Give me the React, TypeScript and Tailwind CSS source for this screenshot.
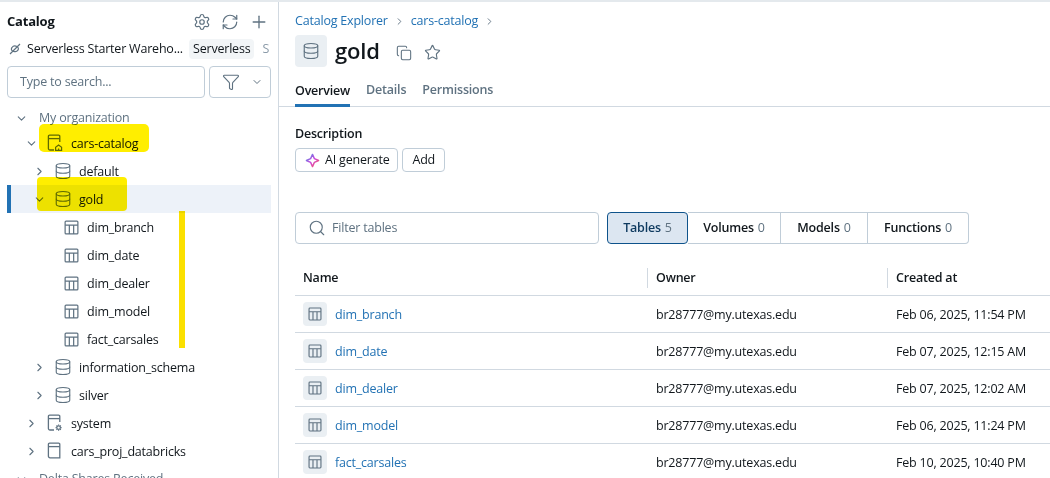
import React from "react";
import { ChevronDown, ChevronRight, Copy, Database, Filter, Plus, RefreshCw, Search, Settings, Star } from "lucide-react";

function TableIcon({ size = 16, className = "" }: { size?: number; className?: string }) {
  return (
    <svg width={size} height={size} viewBox="0 0 16 16" fill="none" stroke="currentColor" strokeWidth="1.3" className={className}>
      <rect x="1.2" y="1.2" width="13.6" height="13.6" rx="1" />
      <path d="M1.2 5.4h13.6M5.7 5.4v9.4M10.3 5.4v9.4" />
    </svg>
  );
}

function CatalogIcon({ badge }: { badge?: "home" | "gear" }) {
  return (
    <svg width="16" height="18" viewBox="0 0 16 18" fill="none" stroke="currentColor" strokeWidth="1.3" className="text-[#5f7281]">
      <path d={badge ? "M7 16H3a1.6 1.6 0 0 1-1.6-1.6V2.4A1.2 1.2 0 0 1 2.6 1.2h9a1.2 1.2 0 0 1 1.2 1.2V8" : "M2.6 1.2h9a1.2 1.2 0 0 1 1.2 1.2v13.4H3a1.6 1.6 0 0 1-1.6-1.6V2.4a1.2 1.2 0 0 1 1.2-1.2Z"} />
      <path d="M1.4 4.6h11.4" />
      {badge === "home" && <path d="M8.6 16.4v-3.2l3-2.2 3 2.2v3.2ZM11.6 16.4v-2" strokeWidth="1.2" />}
      {badge === "gear" && (
        <g strokeWidth="1.2">
          <circle cx="11.6" cy="13.6" r="1.8" />
          <path d="M11.6 10.4v1.2M11.6 15.6v1.2M8.6 13.6h1.2M13.4 13.6h1.2M9.5 11.5l.8.8M13 15l.8.8M13.8 11.5l-.8.8M10.3 15l-.8.8" />
        </g>
      )}
    </svg>
  );
}

function Db({ size = 18 }: { size?: number }) {
  return <Database size={size} strokeWidth={1.5} className="text-[#5f7281] shrink-0" />;
}

function Tree({ pad, chev, icon, label, selected }: { pad: number; chev?: "down" | "right"; icon: React.ReactNode; label: string; selected?: boolean }) {
  return (
    <div className={"flex h-7 items-center text-[12.5px] text-[#11171c] ml-[7px] w-[264px] border-l-4 " + (selected ? "bg-[#edf2f9] border-[#2272b4]" : "border-transparent")} style={{ paddingLeft: pad }}>
      <span className="flex w-4 justify-center text-[#5f7281] shrink-0">
        {chev === "down" && <ChevronDown size={13} strokeWidth={2} />}
        {chev === "right" && <ChevronRight size={13} strokeWidth={2} />}
      </span>
      <span className="ml-[8px] flex w-4 justify-center shrink-0">{icon}</span>
      <span className="ml-2 pt-[3px]">{label}</span>
    </div>
  );
}

const tables = [
  ["dim_branch", "Feb 06, 2025, 11:54 PM"],
  ["dim_date", "Feb 07, 2025, 12:15 AM"],
  ["dim_dealer", "Feb 07, 2025, 12:02 AM"],
  ["dim_model", "Feb 06, 2025, 11:24 PM"],
  ["fact_carsales", "Feb 10, 2025, 10:40 PM"],
];

function Sidebar() {
  return (
    <aside className="relative w-[279px] shrink-0 border-r border-[#d1d9e1] h-full overflow-hidden">
      <div className="flex h-[38px] items-center justify-between pl-[7px] pr-[9px] pt-[1px]">
        <span className="text-[13px] font-bold text-[#11171c]">Catalog</span>
        <div className="flex items-center gap-[10px] text-[#5f7281]">
          <Settings size={18} strokeWidth={1.6} />
          <RefreshCw size={18} strokeWidth={1.6} />
          <Plus size={20} strokeWidth={1.6} />
        </div>
      </div>
      <div className="flex h-[20px] mt-[-1px] items-center pl-[9px] text-[12.5px] text-[#11171c] whitespace-nowrap overflow-hidden">
        <svg width="12" height="12" viewBox="0 0 12 12" fill="none" stroke="#5f7281" strokeWidth="1.2" className="shrink-0">
          <path d="M3 4.5C4 3 6 2.5 8 3.5c1.5.8 1.8 2.6.8 3.8C7.6 8.7 5 9 3.5 8 2.2 7 2 5.7 3 4.5ZM1 11 11 1" />
        </svg>
        <span className="ml-[6px] w-[158px]">Serverless Starter Wareho...</span>
        <span className="ml-1 rounded bg-[#f2f5f7] px-1 leading-[20px]">Serverless</span>
        <span className="ml-2 text-[#8a9aa8]">S</span>
      </div>
      <div className="mt-[7px] flex gap-1 pl-[7px]">
        <div className="flex h-8 w-[198px] items-center rounded border border-[#c0cdd8] pl-[12px] text-[12.5px] text-[#5f7281]">Type to search...</div>
        <div className="flex h-8 w-[62px] items-center rounded border border-[#c0cdd8] pl-[12px] text-[#5f7281]">
          <Filter size={18} strokeWidth={1.5} />
          <ChevronDown size={12} strokeWidth={2} className="ml-[11px]" />
        </div>
      </div>
      <div className="mt-[3px]">
        <div className="flex h-7 items-center pl-[15px] text-[12.5px] text-[#5f7281] pt-[7px]">
          <ChevronDown size={13} strokeWidth={2} />
          <span className="ml-[11px]">My organization</span>
        </div>
        <Tree pad={12} chev="down" icon={<CatalogIcon badge="home" />} label="cars-catalog" />
        <Tree pad={20} chev="right" icon={<Db />} label="default" />
        <Tree pad={20} chev="down" icon={<Db />} label="gold" selected />
        {tables.map(([n]) => (
          <Tree key={n} pad={28} icon={<TableIcon size={15} className="text-[#5f7281]" />} label={n} />
        ))}
        <Tree pad={20} chev="right" icon={<Db />} label="information_schema" />
        <Tree pad={20} chev="right" icon={<Db />} label="silver" />
        <Tree pad={12} chev="right" icon={<CatalogIcon badge="gear" />} label="system" />
        <Tree pad={12} chev="right" icon={<CatalogIcon />} label="cars_proj_databricks" />
        <div className="flex h-7 items-center pl-[15px] text-[12.5px] text-[#5f7281]">
          <ChevronDown size={13} strokeWidth={2} />
          <span className="ml-[11px]">Delta Shares Received</span>
        </div>
      </div>
      {/* marker strokes drawn over the tree */}
      <div className="absolute left-[39px] top-[122px] h-[28px] w-[110px] rounded-[5px] bg-[#ffee00] mix-blend-multiply" />
      <div className="absolute left-[37px] top-[175px] h-[34px] w-[90px] rounded-[4px] bg-[#ffee00] mix-blend-multiply" />
      <div className="absolute left-[179px] top-[209px] h-[137px] w-[6px] bg-[#fbe000] mix-blend-multiply" />
    </aside>
  );
}

function Seg({ label, n, active, last }: { label: string; n: number; active?: boolean; last?: boolean }) {
  return (
    <div className={"flex h-full items-center justify-center text-[12.5px] font-semibold " + (active ? "w-[81px] rounded border border-[#0e538b] bg-[#dce6f1] text-[#0e3a5f]" : "border-y border-r border-[#c0cdd8] text-[#11171c] " + (last ? "w-[101px] rounded-r" : label === "Volumes" ? "w-[93px]" : "w-[87px]"))}>
      {label}<span className="ml-1 font-normal text-[#5f7281]">{n}</span>
    </div>
  );
}

function Main() {
  return (
    <main className="min-w-0 flex-1 h-full overflow-hidden">
      <div className="flex h-[33px] items-center gap-[5px] pl-[16px] pt-[6px] text-[12.5px] text-[#2272b4]">
        <span>Catalog Explorer</span>
        <ChevronRight size={11} className="mx-[1px] text-[#5f7281]" />
        <span>cars-catalog</span>
        <ChevronRight size={11} className="mx-[1px] text-[#5f7281]" />
      </div>
      <div className="flex items-center pl-[16px]">
        <div className="flex h-8 w-8 items-center justify-center rounded bg-[#eaeff3]"><Db /></div>
        <h1 className="ml-2 -mt-[2px] text-[22px] font-semibold leading-8 text-[#11171c]">gold</h1>
        <Copy size={16} strokeWidth={1.6} className="ml-[16px] mt-[3px] text-[#5f7281]" />
        <Star size={17} strokeWidth={1.6} className="ml-[12px] mt-[2px] text-[#5f7281]" />
      </div>
      <div className="mt-[8px] flex h-[32px] gap-4 border-b border-[#d1d9e1] pl-[16px] text-[12.5px] font-semibold text-[#5f7281]">
        <span className="flex h-[32px] items-center border-b-[3px] border-[#2272b4] pt-[3px] text-[#11171c]">Overview</span>
        <span className="flex items-center pb-[1px]">Details</span>
        <span className="flex items-center pb-[1px]">Permissions</span>
      </div>
      <div className="pl-[16px] pt-[17px]">
        <div className="text-[12.5px] font-semibold leading-[20px] text-[#11171c]">Description</div>
        <div className="mt-[4px] flex gap-1 text-[12.5px] text-[#11171c]">
          <div className="flex h-6 items-center rounded border border-[#c0cdd8] pl-[9px] pr-[8px]">
            <svg width="15" height="15" viewBox="0 0 16 16" fill="none" strokeWidth="1.5">
              <defs><linearGradient id="sp" x1="0" y1="0" x2="1" y2="1"><stop offset="0" stopColor="#4299e0" /><stop offset=".5" stopColor="#ca42e0" /><stop offset="1" stopColor="#ff5f46" /></linearGradient></defs>
              <path d="M8 1.5 10 6l4.5 2-4.5 2-2 4.5L6 10 1.5 8 6 6Z" stroke="url(#sp)" strokeLinejoin="round" />
            </svg>
            <span className="ml-[5px]">AI generate</span>
          </div>
          <div className="flex h-6 items-center rounded border border-[#c0cdd8] px-[9px]">Add</div>
        </div>
      </div>
      <div className="mt-[40px] flex h-8 pl-[16px]">
        <div className="flex w-[304px] items-center rounded border border-[#c0cdd8] pl-[12px] text-[12.5px] text-[#5f7281]">
          <Search size={18} strokeWidth={1.5} />
          <span className="ml-[6px]">Filter tables</span>
        </div>
        <div className="ml-2 flex h-8 w-[362px]">
          <Seg label="Tables" n={5} active />
          <Seg label="Volumes" n={0} />
          <Seg label="Models" n={0} />
          <Seg label="Functions" n={0} last />
        </div>
      </div>
      <div className="ml-[16px] mt-[18px] text-[12.5px]">
        <div className="flex h-[34px] items-center border-b border-[#d1d9e1] pb-[1px] font-semibold text-[#11171c]">
          <div className="w-[352px] pl-2">Name</div>
          <div className="h-[20px] w-[240px] border-l border-[#d1d9e1] pl-2 leading-[20px]">Owner</div>
          <div className="h-[20px] flex-1 border-l border-[#d1d9e1] pl-2 leading-[20px]">Created at</div>
        </div>
        {tables.map(([n, d]) => (
          <div key={n} className="flex h-[37px] items-center border-b border-[#d1d9e1] text-[#11171c]">
            <div className="flex w-[352px] items-center pl-2 text-[#2272b4]">
              <span className="flex h-6 w-6 items-center justify-center rounded bg-[#eaeff3]"><TableIcon size={14} className="text-[#5f7281]" /></span>
              <span className="ml-2 pt-[3px]">{n}</span>
            </div>
            <div className="w-[240px] pl-[9px] pt-[3px]">br28777@my.utexas.edu</div>
            <div className="flex-1 whitespace-nowrap pl-[9px] pt-[3px]">{d}</div>
          </div>
        ))}
      </div>
    </main>
  );
}

export default function App() {
  return (
    <div className="flex h-[478px] w-[1050px] overflow-hidden border-t-2 border-[#e4e9ed] bg-white tracking-[-0.2px]" style={{ fontFamily: '"Open Sans", "Noto Sans", sans-serif' }}>
      <Sidebar />
      <Main />
    </div>
  );
}
